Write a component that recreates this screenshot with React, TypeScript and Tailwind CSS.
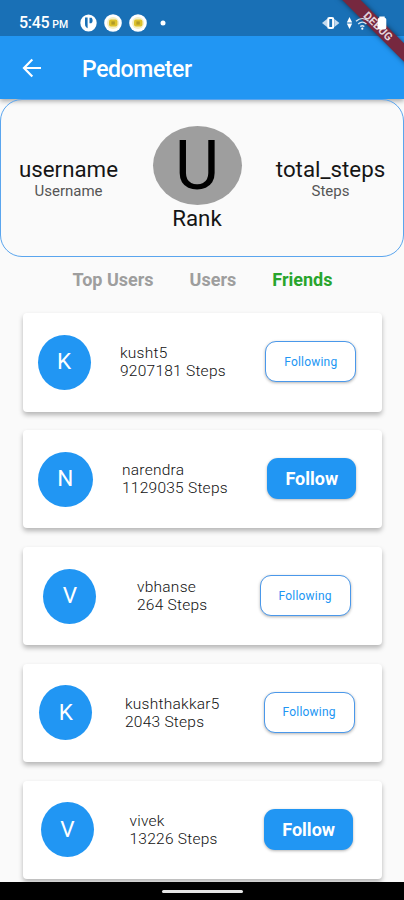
import clsx from 'clsx';

type Friend = {
  name: string;
  steps: number;
  following: boolean;
  avatarClass: string;
  textClass: string;
};

const FRIENDS: Friend[] = [
  { name: 'kusht5', steps: 9207181, following: true, avatarClass: 'w-[53px]', textClass: 'w-[105px]' },
  { name: 'narendra', steps: 1129035, following: false, avatarClass: 'w-[55px]', textClass: 'w-[105px]' },
  { name: 'vbhanse', steps: 264, following: true, avatarClass: 'w-[53px]', textClass: 'w-[71px]' },
  { name: 'kushthakkar5', steps: 2043, following: true, avatarClass: 'w-[53px]', textClass: 'w-[95px]' },
  { name: 'vivek', steps: 13226, following: false, avatarClass: 'w-[53px]', textClass: 'w-[88px]' },
];

function NotificationDot() {
  return (
    <svg width="18" height="18" viewBox="0 0 18 18">
      <circle cx="9" cy="9" r="8.8" fill="#fff" />
      <circle cx="9" cy="9" r="6" fill="#f5efc4" />
      <rect x="5" y="5.6" width="8.4" height="6.8" rx="2" fill="#dcc12c" />
      <rect x="7.4" y="7.4" width="3.4" height="3.2" fill="#b09a28" />
    </svg>
  );
}

function DebugBanner() {
  return (
    <div className="pointer-events-none absolute right-0 top-0 h-[70px] w-[70px] overflow-hidden">
      <div className="absolute left-[-6px] top-[20px] flex h-[13px] w-[100px] rotate-45 items-center justify-center bg-[#76283f] text-[11px] font-bold leading-none tracking-[0.2px] text-[#e6d5dc] shadow-[0_0_5px_rgba(0,0,0,0.5)]">
        DEBUG
      </div>
    </div>
  );
}

function StatusBar() {
  return (
    <div className="relative flex h-9 items-center bg-[#1970b6] pl-[19px] pt-[10px] text-white">
      <div className="flex w-[61px] items-baseline gap-[3px] whitespace-nowrap font-medium">
        <span className="text-[16px] tracking-[-0.3px]">5:45</span>
        <span className="text-[10.5px]">PM</span>
      </div>
      <div className="flex items-center gap-[7px]">
        <svg width="17" height="18" viewBox="0 0 17 18">
          <ellipse cx="8.5" cy="9" rx="8.2" ry="8.6" fill="#fff" />
          <path d="M5 3.4h2.6v10.8C5.8 13.6 5 12 5 10z" fill="#1970b6" />
          <path d="M9.5 3.8h2.2c1.4 1.6 1.2 4.6-.4 5.4H9.5z" fill="#1970b6" />
        </svg>
        <NotificationDot />
        <NotificationDot />
        <svg className="ml-[6px]" width="6" height="6" viewBox="0 0 6 6">
          <circle cx="3" cy="3" r="2.5" fill="#fff" />
        </svg>
      </div>
      <svg className="relative z-10 ml-auto mr-[14px]" width="68" height="18" viewBox="0 0 68 18">
        <rect x="6.2" y="4" width="5" height="10" rx="1.2" fill="none" stroke="#fff" strokeWidth="2.2" />
        <path d="M5 5v8L0 9zM12.400 5v8l5-4z" fill="#c4daee" />
        <path d="M27.500 3l2.700 5.400h-5.400zM27.500 15l2.700-5.400h-5.400z" fill="#fff" />
        <g fill="none" stroke="#d6e4f0" strokeWidth="1.4">
          <path d="M34 7.2c3.8-3.5 8.8-3.5 12.6 0" />
          <path d="M36.2 10c2.5-2.3 5.7-2.3 8.2 0" />
          <path d="M38.3 12.6c1.3-1.1 2.7-1.1 4 0" />
        </g>
        <circle cx="40.3" cy="14.7" r="1.1" fill="#fff" />
        <path d="M57.3 2.4h5.4v1.4c1 .2 1.6.9 1.6 1.9v7.9c0 1.3-.7 2-2 2h-4.6c-1.3 0-2-.7-2-2V5.7c0-1 .6-1.7 1.6-1.9z" fill="#fff" />
      </svg>
      <DebugBanner />
    </div>
  );
}

function FriendCard({ friend }: { friend: Friend }) {
  return (
    <li className="flex h-[98.5px] shrink-0 items-center justify-around rounded-[4px] bg-white shadow-[0_3px_5px_rgba(0,0,0,0.28)]">
      <div
        className={clsx(
          'flex h-[55px] items-center justify-center rounded-[50%] bg-[#2196f3] text-[22.5px] text-white',
          friend.avatarClass,
        )}
      >
        {friend.name[0].toUpperCase()}
      </div>
      <div
        className={clsx(
          'whitespace-nowrap text-[15.5px] font-light leading-[18px] tracking-[0.25px] text-[#111]',
          friend.textClass,
        )}
      >
        <p>{friend.name}</p>
        <p>{friend.steps} Steps</p>
      </div>
      <button
        className={clsx(
          'mx-[11px] mb-px h-[41px] rounded-[11px] shadow-[0_1px_3px_rgba(0,0,0,0.3)]',
          friend.following
            ? 'w-[91px] border border-[#4a98ea] bg-white text-[12px] tracking-[0.2px] text-[#2196f3]'
            : 'w-[89px] bg-[#2196f3] text-[18px] font-bold text-white',
        )}
      >
        {friend.following ? 'Following' : 'Follow'}
      </button>
    </li>
  );
}

export default function App() {
  return (
    <div className="flex h-[900px] w-[404px] flex-col overflow-hidden bg-[#fafafa] font-['Roboto',sans-serif]">
      <div className="relative z-10">
        <StatusBar />
      </div>
      <header className="flex h-[63px] shrink-0 items-center bg-[#2196f3] pl-[22px] text-white shadow-[0_2px_5px_rgba(0,0,0,0.35)]">
        <svg width="20" height="20" viewBox="0 0 20 20" fill="none" stroke="#fff" strokeWidth="2.2">
          <path d="M19 10H2.5M10.3 1.5L2 10l8.3 8.5" />
        </svg>
        <h1 className="ml-10 pt-[5px] text-[23px] font-medium tracking-[-0.4px]">Pedometer</h1>
      </header>

      <section className="flex h-[158px] shrink-0 justify-between rounded-[22px] border border-[#5aa5ee] px-[17px] text-[#151515]">
        <div className="w-[101px] pt-[57px] text-center">
          <p className="text-[22.3px] leading-[25px]">username</p>
          <p className="text-[15px] leading-[19px] text-[#555]">Username</p>
        </div>
        <div className="flex w-[90px] flex-col items-center pt-[26px]">
          <div className="flex h-[79px] w-[89px] items-center justify-center rounded-[50%] bg-[#9e9e9e] text-[68px] leading-none text-black">
            U
          </div>
          <p className="text-[22.3px] leading-[26px]">Rank</p>
        </div>
        <div className="w-[111px] whitespace-nowrap pt-[57px] text-center">
          <p className="text-[22.3px] leading-[25px]">total_steps</p>
          <p className="text-[15px] leading-[19px] text-[#555]">Steps</p>
        </div>
      </section>

      <nav className="flex h-[56px] shrink-0 gap-[36px] pl-[72.500px] pt-[9px] text-[18px] font-bold text-[#9e9e9e]">
        <span>Top Users</span>
        <span>Users</span>
        <span className="text-[#28a52c]">Friends</span>
      </nav>

      <ul className="flex min-h-0 flex-1 flex-col gap-[18.4px] pl-[23px] pr-[22px]">
        {FRIENDS.map((friend) => (
          <FriendCard key={friend.name} friend={friend} />
        ))}
      </ul>

      <footer className="relative flex h-[18px] shrink-0 items-center justify-center bg-black">
        <div className="h-[3px] w-[81px] rounded-full bg-[#e6e6e6]" />
      </footer>
    </div>
  );
}
